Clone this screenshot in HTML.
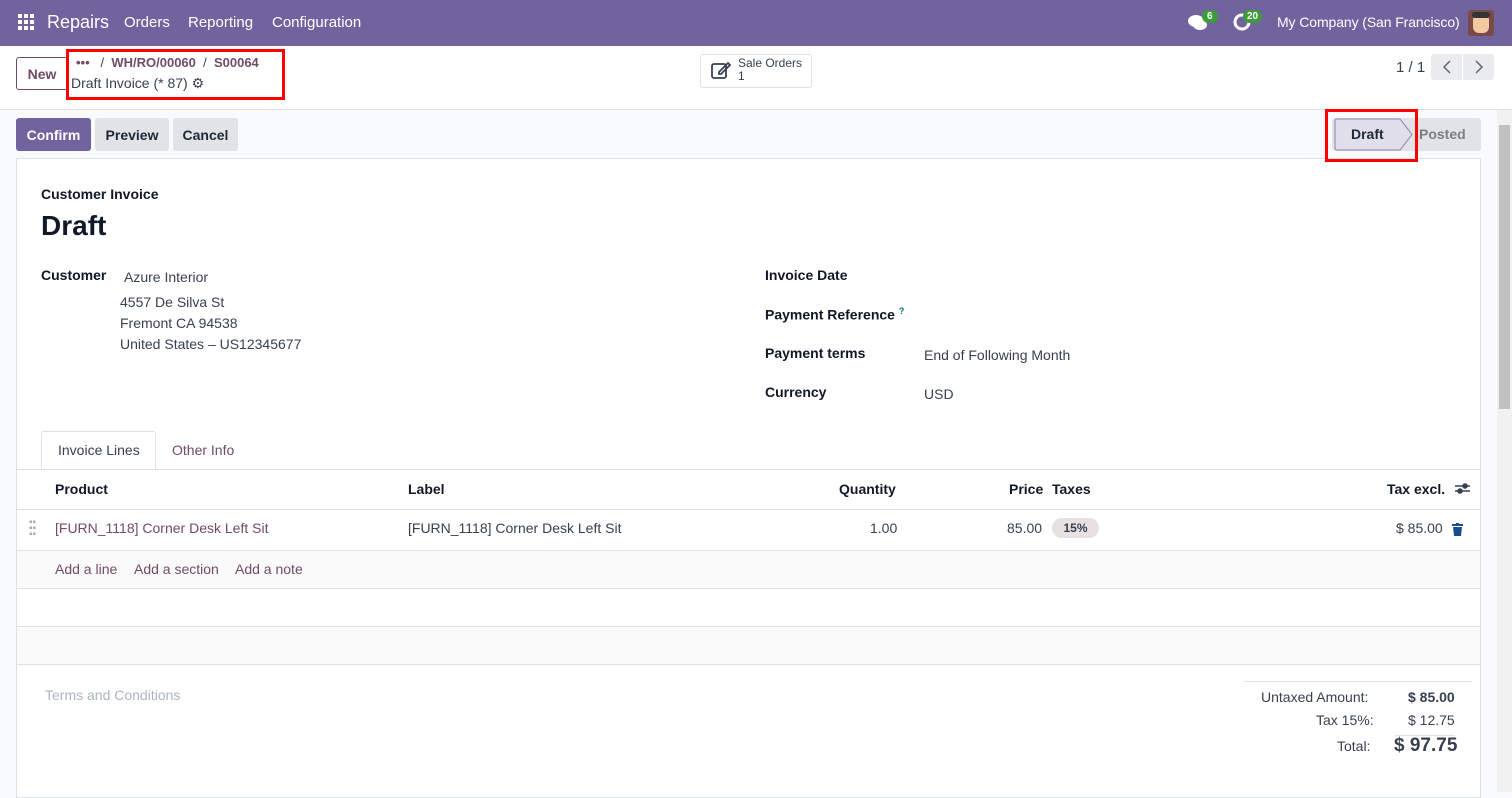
<!DOCTYPE html>
<html><head><meta charset="utf-8"><style>
*{box-sizing:border-box;margin:0;padding:0}
body{width:1512px;height:792px;overflow:hidden;font-family:"Liberation Sans",sans-serif;font-size:14px;color:#374151;background:#f9fafb;position:relative}
.a{position:absolute;white-space:nowrap}
.nav{left:0;top:0;width:1512px;height:46px;background:#71639e;color:#fff}
.cp{left:0;top:46px;width:1512px;height:64px;background:#fff;border-bottom:1px solid #dee2e6}
.btn{position:absolute;height:33px;border-radius:3px;font-weight:bold;font-size:14px;display:flex;align-items:center;justify-content:center}
.sheet{left:16px;top:158px;width:1465px;height:640px;background:#fff;border:1px solid #dee2e6}
.lbl{font-weight:bold;color:#111827;font-size:14px}
.link{color:#714b67}
.hr{position:absolute;left:17px;width:1463px;height:1px;background:#dee2e6}
</style></head><body>
<div class="a nav">
  <svg class="a" style="left:18px;top:14px" width="16" height="16" viewBox="0 0 16 16" fill="#fff"><rect x="0" y="0" width="4" height="4"/><rect x="6" y="0" width="4" height="4"/><rect x="12" y="0" width="4" height="4"/><rect x="0" y="6" width="4" height="4"/><rect x="6" y="6" width="4" height="4"/><rect x="12" y="6" width="4" height="4"/><rect x="0" y="12" width="4" height="4"/><rect x="6" y="12" width="4" height="4"/><rect x="12" y="12" width="4" height="4"/></svg>
  <div class="a" style="left:47px;top:12px;font-size:18px">Repairs</div>
  <div class="a" style="left:124px;top:14px;font-size:15px">Orders</div>
  <div class="a" style="left:188px;top:14px;font-size:15px">Reporting</div>
  <div class="a" style="left:272px;top:14px;font-size:15px">Configuration</div>
  <svg class="a" style="left:1188px;top:14px" width="20" height="18" viewBox="0 0 20 18" fill="#fff"><ellipse cx="8" cy="7" rx="8" ry="6"/><ellipse cx="12" cy="11" rx="7" ry="5"/></svg>
  <div class="a" style="left:1202px;top:10px;background:#3d9c3a;border-radius:8px;font-size:10px;font-weight:bold;padding:1px 5px">6</div>
  <svg class="a" style="left:1233px;top:13px" width="18" height="18" viewBox="0 0 18 18"><circle cx="9" cy="9" r="7" fill="none" stroke="#fff" stroke-width="3"/></svg>
  <div class="a" style="left:1243px;top:10px;background:#3d9c3a;border-radius:8px;font-size:10px;font-weight:bold;padding:1px 4px">20</div>
  <div class="a" style="left:1277px;top:14px;font-size:14px;letter-spacing:-0.1px">My Company (San Francisco)</div>
  <div class="a" style="left:1468px;top:10px;width:26px;height:26px;border-radius:3px;background:#7a4a4a"><div class="a" style="left:5px;top:4px;width:16px;height:19px;border-radius:6px;background:#f2c9a0"></div><div class="a" style="left:4px;top:2px;width:18px;height:6px;background:#333;border-radius:3px"></div></div>
</div>
<div class="a cp">
  <div class="btn" style="left:16px;top:11px;width:52px;height:33px;border:1px solid #714b67;color:#714b67;background:#fff">New</div>
  <div class="a" style="left:66px;top:3px;width:219px;height:51px;border:3px solid #f00"></div>
  <div class="a" style="left:76px;top:9px;font-size:13px;color:#714b67;font-weight:bold">•••&nbsp;&nbsp;&nbsp;<span style="color:#374151;font-weight:normal">/</span>&nbsp;&nbsp;WH/RO/00060&nbsp;&nbsp;<span style="color:#374151;font-weight:normal">/</span>&nbsp;&nbsp;S00064</div>
  <div class="a" style="left:71px;top:29px;font-size:14px;color:#374151">Draft Invoice (* 87) <span style="font-size:14px">⚙</span></div>
  <div class="a" style="left:700px;top:8px;width:112px;height:34px;border:1px solid #dee2e6;border-radius:3px;background:#fff"></div>
  <svg class="a" style="left:711px;top:15px" width="20" height="18" viewBox="0 0 20 18" fill="none" stroke="#374151" stroke-width="1.8"><rect x="1" y="3" width="14" height="14" rx="2"/><path d="M8 11l9-9 2 2-9 9H8z"/></svg>
  <div class="a" style="left:738px;top:11px;font-size:12px;line-height:13px;color:#374151">Sale Orders<br>1</div>
  <div class="a" style="left:1396px;top:13px;font-size:15px">1 / 1</div>
  <div class="a" style="left:1431px;top:8px;width:63px;height:26px;background:#e9ecef;border-radius:3px"></div>
  <div class="a" style="left:1462px;top:8px;width:1px;height:26px;background:#fff"></div>
  <svg class="a" style="left:1442px;top:14px" width="10" height="14" viewBox="0 0 10 14" fill="none" stroke="#666" stroke-width="1.5"><path d="M8 1L2 7l6 6"/></svg>
  <svg class="a" style="left:1474px;top:14px" width="10" height="14" viewBox="0 0 10 14" fill="none" stroke="#666" stroke-width="1.5"><path d="M2 1l6 6-6 6"/></svg>
</div>
<div class="btn" style="left:16px;top:118px;width:75px;background:#71639e;color:#fff">Confirm</div>
<div class="btn" style="left:95px;top:118px;width:74px;background:#e1e3e6;color:#1f2937">Preview</div>
<div class="btn" style="left:173px;top:118px;width:65px;background:#e1e3e6;color:#1f2937">Cancel</div>
<div class="a" style="left:1332px;top:118px;width:149px;height:33px;background:#e1e3e6;border-radius:3px"></div>
<svg class="a" style="left:1334px;top:118px" width="82" height="33"><path d="M1 3a2 2 0 0 1 2-2H66L78 16.5 66 32H3a2 2 0 0 1-2-2z" fill="#e1dfec" stroke="#8a7fb8"/></svg>
<div class="a" style="left:1351px;top:126px;font-weight:bold;color:#1f2937">Draft</div>
<div class="a" style="left:1419px;top:126px;font-weight:bold;color:#7a7f85">Posted</div>
<div class="a" style="left:1497px;top:110px;width:15px;height:682px;background:#f1f1f1"></div>
<div class="a" style="left:1499px;top:125px;width:11px;height:284px;background:#c1c1c1"></div>
<div class="a sheet"></div>
<div class="a" style="left:1325px;top:109px;width:93px;height:53px;border:3px solid #f00"></div>
<div class="a lbl" style="left:41px;top:186px">Customer Invoice</div>
<div class="a" style="left:41px;top:210px;font-size:28px;font-weight:bold;color:#111827">Draft</div>
<div class="a lbl" style="left:41px;top:267px">Customer</div>
<div class="a" style="left:124px;top:269px">Azure Interior</div>
<div class="a" style="left:120px;top:292px;line-height:21px">4557 De Silva St<br>Fremont CA 94538<br>United States – US12345677</div>
<div class="a lbl" style="left:765px;top:267px">Invoice Date</div>
<div class="a lbl" style="left:765px;top:306px">Payment Reference <sup style="color:#017e84;font-size:9px">?</sup></div>
<div class="a lbl" style="left:765px;top:345px">Payment terms</div>
<div class="a" style="left:924px;top:347px">End of Following Month</div>
<div class="a lbl" style="left:765px;top:384px">Currency</div>
<div class="a" style="left:924px;top:386px">USD</div>
<div class="a" style="left:41px;top:431px;width:115px;height:39px;border:1px solid #dee2e6;border-bottom:1px solid #fff;background:#fff;border-radius:3px 3px 0 0"></div>
<div class="a" style="left:58px;top:442px">Invoice Lines</div>
<div class="a link" style="left:172px;top:442px">Other Info</div>
<div class="hr" style="top:469px"></div>
<div class="a lbl" style="left:55px;top:481px">Product</div>
<div class="a lbl" style="left:408px;top:481px">Label</div>
<div class="a lbl" style="left:839px;top:481px">Quantity</div>
<div class="a lbl" style="left:1009px;top:481px">Price</div>
<div class="a lbl" style="left:1052px;top:481px">Taxes</div>
<div class="a lbl" style="left:1387px;top:481px">Tax excl.</div>
<svg class="a" style="left:1455px;top:482px" width="15" height="13" viewBox="0 0 15 13" stroke="#374151" stroke-width="1.5" fill="#374151"><path d="M0 4h15M0 9h15"/><circle cx="10" cy="4" r="2"/><circle cx="5" cy="9" r="2"/></svg>
<div class="hr" style="top:509px"></div>
<div class="a" style="left:29px;top:520px;color:#aaa;font-size:10px;line-height:6px">▪▪<br>▪▪<br>▪▪</div>
<div class="a link" style="left:55px;top:520px">[FURN_1118] Corner Desk Left Sit</div>
<div class="a" style="left:408px;top:520px">[FURN_1118] Corner Desk Left Sit</div>
<div class="a" style="left:870px;top:520px">1.00</div>
<div class="a" style="left:1007px;top:520px">85.00</div>
<div class="a" style="left:1052px;top:518px;width:47px;height:20px;border-radius:10px;background:#e7e1e2;font-size:12px;font-weight:bold;text-align:center;line-height:20px">15%</div>
<div class="a" style="left:1396px;top:520px">$ 85.00</div>
<svg class="a" style="left:1452px;top:523px" width="11" height="13" viewBox="0 0 11 13" fill="#1a4e8a"><rect x="0" y="1" width="11" height="2"/><rect x="4" y="0" width="3" height="2"/><path d="M1 4h9l-1 9H2z"/></svg>
<div class="hr" style="top:550px"></div>
<div class="a" style="left:17px;top:551px;width:1463px;height:37px;background:#fafafa"></div>
<div class="a link" style="left:55px;top:561px">Add a line</div>
<div class="a link" style="left:134px;top:561px">Add a section</div>
<div class="a link" style="left:235px;top:561px">Add a note</div>
<div class="hr" style="top:588px"></div>
<div class="a" style="left:17px;top:627px;width:1463px;height:37px;background:#fafafa"></div>
<div class="hr" style="top:626px"></div>
<div class="hr" style="top:664px"></div>
<div class="a" style="left:45px;top:687px;color:#adb5bd">Terms and Conditions</div>
<div class="a" style="left:1244px;top:681px;width:228px;height:1px;background:#dee2e6"></div>
<div class="a" style="left:1261px;top:689px">Untaxed Amount:</div>
<div class="a" style="left:1408px;top:689px;font-weight:bold">$ 85.00</div>
<div class="a" style="left:1316px;top:712px">Tax 15%:</div>
<div class="a" style="left:1408px;top:712px">$ 12.75</div>
<div class="a" style="left:1395px;top:735px;width:60px;height:1px;background:#dee2e6"></div>
<div class="a" style="left:1337px;top:738px">Total:</div>
<div class="a" style="left:1394px;top:735px;font-size:19px;font-weight:bold">$ 97.75</div>
</body></html>
